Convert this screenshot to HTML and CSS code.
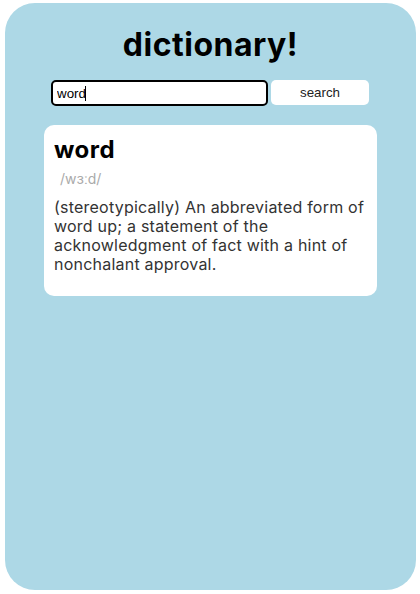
FILE: index.html
```html
<!DOCTYPE html>
<html lang="en">
<head>
<meta charset="utf-8">
<title>dictionary!</title>
<link rel="stylesheet" href="styles.css">
</head>
<body>
<main class="app">
  <h1 class="title">dictionary!</h1>
  <form class="search" onsubmit="return false">
    <span class="input-wrap">
      <input class="search-input" type="text" value="word">
      <span class="caret"></span>
    </span>
    <button class="search-btn" type="submit">search</button>
  </form>
  <section class="card">
    <h2 class="word">word</h2>
    <div class="phonetic">/wɜːd/</div>
    <p class="definition">(stereotypically) An abbreviated form of word up; a statement of the acknowledgment of fact with a hint of nonchalant approval.</p>
  </section>
</main>
</body>
</html>
```

FILE: styles.css
```css
html, body {
  margin: 0;
  padding: 0;
  background: #ffffff;
}
body {
  font-family: "Inter", "Liberation Sans", sans-serif;
}
.app {
  box-sizing: border-box;
  width: 411px;
  height: 587px;
  margin: 3px 0 0 5px;
  background: #add8e6;
  border-radius: 30px;
  display: flex;
  flex-direction: column;
  align-items: center;
  padding-top: 22px;
}
.title {
  margin: 0;
  font-size: 32px;
  font-weight: 700;
  line-height: 39px;
  color: #000;
  letter-spacing: 0.5px;
}
.search {
  display: flex;
  gap: 3px;
  margin: 16px 1px 0 0;
  align-items: flex-start;
}
.input-wrap {
  position: relative;
  display: block;
}
.search-input {
  display: block;
  box-sizing: border-box;
  width: 217px;
  height: 26px;
  margin: 0;
  border: 2px solid #000;
  border-radius: 5px;
  padding: 0 4px;
  font-family: "Liberation Sans", Arial, sans-serif;
  font-size: 13.33px;
  color: #000;
  background: #fff;
  outline: none;
}
.caret {
  position: absolute;
  left: 34px;
  top: 6px;
  width: 1px;
  height: 15px;
  background: #000;
}
.search-btn {
  box-sizing: border-box;
  width: 98px;
  height: 25px;
  margin: 0;
  border: none;
  border-radius: 5px;
  background: #fff;
  font-family: "Liberation Sans", Arial, sans-serif;
  font-size: 13.33px;
  color: #222;
}
.card {
  box-sizing: border-box;
  width: 333px;
  height: 171px;
  margin-top: 19px;
  background: #fff;
  border-radius: 10px;
  padding: 10px 10px;
}
.word {
  margin: 0;
  font-size: 24px;
  font-weight: 700;
  line-height: 30px;
  color: #000;
  letter-spacing: 0.5px;
}
.phonetic {
  margin: 5px 0 0 6px;
  font-size: 14px;
  line-height: 18px;
  color: #aaa;
}
.definition {
  margin: 10px 0 0;
  font-size: 16px;
  line-height: 19px;
  color: #333;
  letter-spacing: 0.22px;
}
```
